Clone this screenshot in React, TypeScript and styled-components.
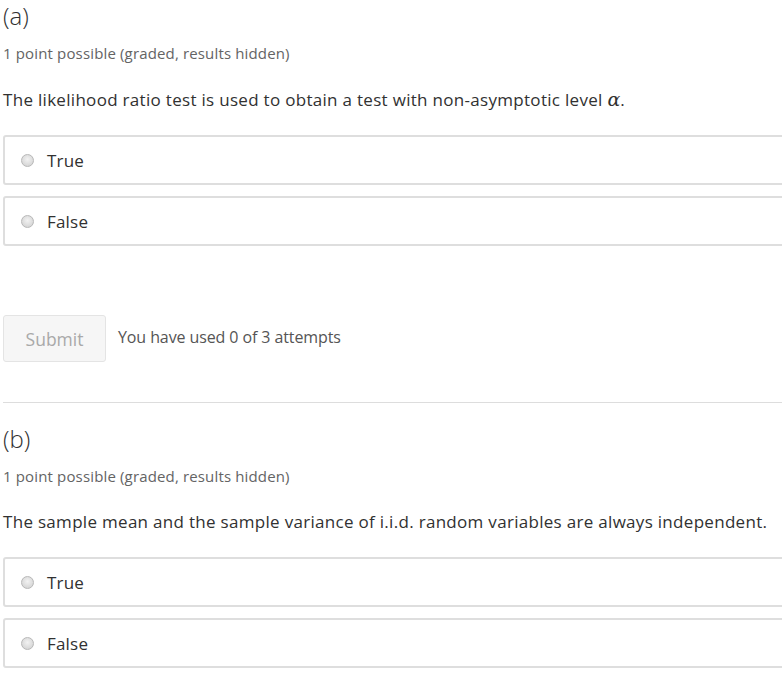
import React from "react";
import styled, { createGlobalStyle } from "styled-components";

const Global = createGlobalStyle`
  html, body { margin: 0; padding: 0; background: #fff; overflow: hidden; }
  body { font-family: "Open Sans", "Noto Sans", sans-serif; color: #313131; }
`;

const Page = styled.div`
  width: 800px;
  padding-left: 3px;
  box-sizing: border-box;
`;

const Problem = styled.section`
  display: flex;
  flex-direction: column;
`;

const Heading = styled.h3`
  margin: 0;
  font-size: 24px;
  font-weight: 300;
  line-height: 32px;
  color: #313131;
`;

const Meta = styled.div`
  margin-top: 11px;
  font-size: 15px;
  letter-spacing: 0.15px;
  line-height: 20px;
  color: #646464;
`;

const Question = styled.p`
  margin: 24px 0 0;
  font-size: 17px;
  letter-spacing: 0.3px;
  line-height: 24px;
  color: #313131;
`;

const Alpha = styled.span`
  font-family: "DejaVu Serif", "Liberation Serif", serif;
  font-style: italic;
  font-size: 19px;
  letter-spacing: 0;
`;

const Choices = styled.div`
  margin-top: 23px;
  display: flex;
  flex-direction: column;
  gap: 11px;
`;

const Choice = styled.label`
  display: flex;
  align-items: center;
  gap: 13px;
  height: 50px;
  box-sizing: border-box;
  padding-left: 16px;
  border: 2px solid #dedede;
  border-radius: 3px;
  background: #fff;
  font-size: 17px;
  letter-spacing: 0.2px;
  color: #313131;
`;

const Radio = styled.span`
  width: 13px;
  height: 13px;
  border-radius: 50%;
  box-sizing: border-box;
  border: 1px solid #b8b8b8;
  background: radial-gradient(circle at 50% 40%, #f2f2f2 0%, #dcdcdc 60%, #cfcfcf 100%);
  flex: none;
`;

const Actions = styled.div`
  margin-top: 69px;
  display: flex;
  align-items: flex-start;
  gap: 12px;
`;

const SubmitButton = styled.button`
  width: 103px;
  height: 47px;
  box-sizing: border-box;
  border: 1px solid #e4e4e4;
  border-radius: 3px;
  background: #f6f6f6;
  color: #a9a9a9;
  font-family: "Open Sans", "Noto Sans", sans-serif;
  font-size: 17.5px;
  padding: 0;
`;

const Attempts = styled.span`
  font-size: 16px;
  letter-spacing: -0.1px;
  line-height: 20px;
  margin-top: 12px;
  color: #555;
`;

const Divider = styled.hr`
  margin: 40px 0 20px;
  border: none;
  border-top: 1px solid #dddddd;
`;

type ProblemProps = { label: string; question: React.ReactNode; showActions?: boolean };

const ProblemBlock = ({ label, question, showActions }: ProblemProps) => (
  <Problem>
    <Heading>({label})</Heading>
    <Meta>1 point possible (graded, results hidden)</Meta>
    <Question>{question}</Question>
    <Choices>
      {["True", "False"].map((c) => (
        <Choice key={c}>
          <Radio />
          {c}
        </Choice>
      ))}
    </Choices>
    {showActions && (
      <Actions>
        <SubmitButton disabled>Submit</SubmitButton>
        <Attempts>You have used 0 of 3 attempts</Attempts>
      </Actions>
    )}
  </Problem>
);

export default function App() {
  return (
    <Page>
      <Global />
      <ProblemBlock
        label="a"
        showActions
        question={
          <>
            The likelihood ratio test is used to obtain a test with non-asymptotic level <Alpha>α</Alpha>.
          </>
        }
      />
      <Divider />
      <ProblemBlock
        label="b"
        question="The sample mean and the sample variance of i.i.d. random variables are always independent."
      />
    </Page>
  );
}
